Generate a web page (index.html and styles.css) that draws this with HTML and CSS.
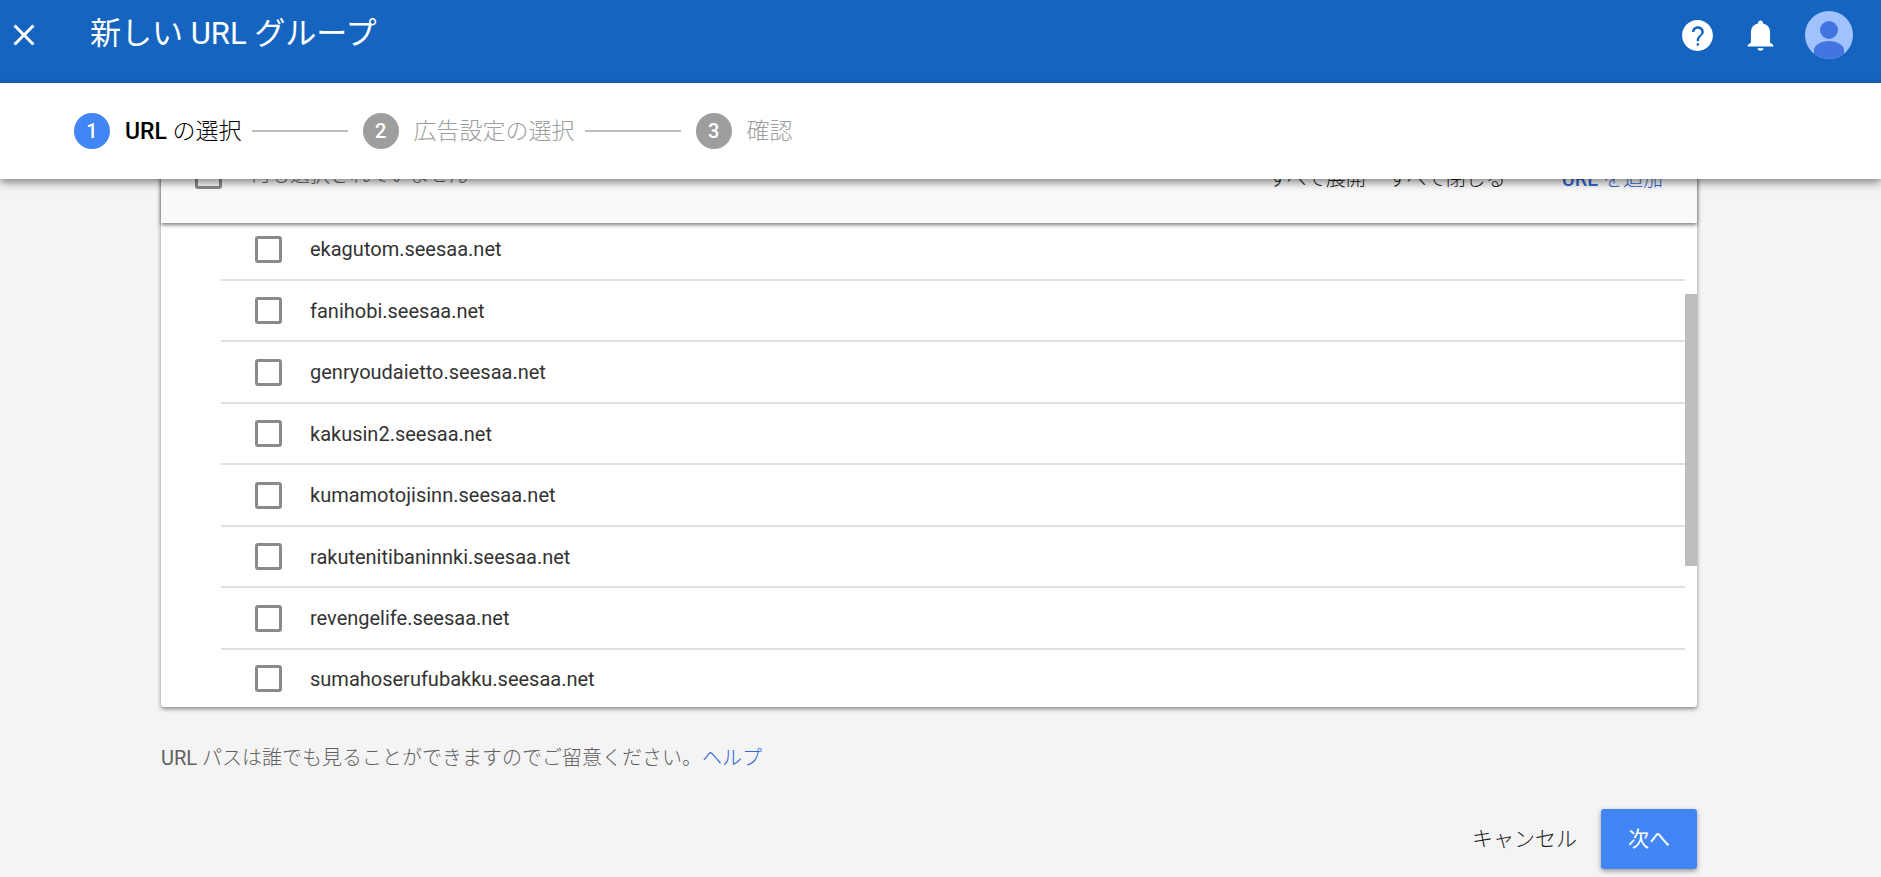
FILE: index.html
```html
<!DOCTYPE html>
<html lang="ja">
<head>
<meta charset="utf-8">
<title>新しい URL グループ</title>
<link rel="stylesheet" href="styles.css">
</head>
<body>
<header class="topbar">
  <button class="icon-button close" type="button" aria-label="閉じる">
    <svg width="36" height="36" viewBox="0 0 24 24"><path d="M19 6.41 17.59 5 12 10.59 6.41 5 5 6.41 10.59 12 5 17.59 6.41 19 12 13.41 17.59 19 19 17.59 13.41 12z"/></svg>
  </button>
  <h1 class="title">新しい URL グループ</h1>
  <div class="actions">
    <button class="icon-button" type="button" aria-label="ヘルプ">
      <svg width="37" height="37" viewBox="0 0 24 24"><path d="M12 2C6.48 2 2 6.48 2 12s4.480 10 10 10 10-4.480 10-10S17.520 2 12 2zm1 16.600h-1.500v-1.500h1.500zm2.100-6.900-.9.920c-.8.830-1.200 1.400-1.200 3.080h-1.500v-.5c0-1.200.45-2.100 1.170-2.830l1.240-1.260c.37-.36.59-.86.59-1.410 0-1.200-.95-2.150-2.250-2.150S10 8.500 10 9.800H8.400c0-2.210 1.640-3.750 3.850-3.750s3.850 1.540 3.850 3.600c0 .88-.4 1.500-1 2.050z"/></svg>
    </button>
    <button class="icon-button" type="button" aria-label="通知">
      <svg width="37" height="37" viewBox="0 0 24 24"><path d="M12 21.800c1.100 0 1.900-.6 1.900-1.600h-3.800c0 1 .8 1.600 1.900 1.600zM18.200 16.500V10c0-3.070-1.600-5.140-4.600-5.820V3.700c0-.83-.77-1.500-1.600-1.500s-1.600.67-1.600 1.500v.48C7.400 4.860 5.800 6.920 5.800 10v6.500L3.700 18.200v.9h16.600v-.9z"/></svg>
    </button>
    <button class="icon-button" type="button" aria-label="アカウント">
      <svg width="48" height="48" viewBox="0 0 48 48"><defs><clipPath id="disc"><circle cx="24" cy="24" r="24"/></clipPath></defs><g clip-path="url(#disc)"><rect width="48" height="48" fill="#a0c3ff"/><circle cx="24" cy="19" r="9" fill="#4374e0"/><path d="M9 48V39c0-5 7-9 15-9s15 4 15 9v9z" fill="#4374e0"/></g></svg>
    </button>
  </div>
</header>

<nav class="stepper" aria-label="手順">
  <ol class="steps">
    <li class="step current" aria-current="step"><span class="badge">1</span><span class="step-name"><span class="latin">URL</span> の選択</span></li>
    <li class="step"><span class="badge">2</span><span class="step-name">広告設定の選択</span></li>
    <li class="step"><span class="badge">3</span><span class="step-name">確認</span></li>
  </ol>
</nav>

<main class="content">
  <section class="card">
    <div class="card-head">
      <label class="select-all"><input class="box" type="checkbox"><span>何も選択されていません</span></label>
      <div class="tools">
        <button class="text-button" type="button">すべて展開</button>
        <button class="text-button" type="button">すべて閉じる</button>
        <button class="text-button add" type="button"><span class="latin">URL</span> を追加</button>
      </div>
    </div>
    <div class="list-wrap">
      <ul class="list">
        <li class="row"><label class="row-label"><input class="box" type="checkbox"><span>ekagutom.seesaa.net</span></label></li>
        <li class="row"><label class="row-label"><input class="box" type="checkbox"><span>fanihobi.seesaa.net</span></label></li>
        <li class="row"><label class="row-label"><input class="box" type="checkbox"><span>genryoudaietto.seesaa.net</span></label></li>
        <li class="row"><label class="row-label"><input class="box" type="checkbox"><span>kakusin2.seesaa.net</span></label></li>
        <li class="row"><label class="row-label"><input class="box" type="checkbox"><span>kumamotojisinn.seesaa.net</span></label></li>
        <li class="row"><label class="row-label"><input class="box" type="checkbox"><span>rakutenitibaninnki.seesaa.net</span></label></li>
        <li class="row"><label class="row-label"><input class="box" type="checkbox"><span>revengelife.seesaa.net</span></label></li>
        <li class="row"><label class="row-label"><input class="box" type="checkbox"><span>sumahoserufubakku.seesaa.net</span></label></li>
      </ul>
      <div class="thumb"></div>
    </div>
  </section>
  <p class="note"><span class="latin">URL</span> パスは誰でも見ることができますのでご留意ください。<a class="help" href="#">ヘルプ</a></p>
  <div class="footer">
    <button class="cancel" type="button">キャンセル</button>
    <button class="next" type="button">次へ</button>
  </div>
</main>
</body>
</html>
```
FILE: styles.css
```css
* { box-sizing: border-box; }
body {
  margin: 0;
  background: #f4f4f4;
  color: #212121;
  font-family: Roboto, "Noto Sans CJK JP", sans-serif;
  font-weight: 300;
  font-size: 20px;
  line-height: 28px;
}
button {
  border: 0;
  padding: 0;
  background: none;
  color: inherit;
  font: inherit;
  cursor: pointer;
}
.latin { font-weight: 400; }

.topbar {
  display: flex;
  align-items: center;
  height: 83px;
  padding: 0 28px 13px 6px;
  background: #1565c0;
  color: #fff;
}
.icon-button { display: flex; }
.icon-button svg { fill: currentColor; }
.title {
  flex: 1;
  margin: 0 0 2px 48px;
  font-size: 31px;
  line-height: 40px;
  font-weight: 400;
}
.actions { display: flex; align-items: center; gap: 26px; }

.stepper {
  position: relative;
  z-index: 2;
  display: flex;
  align-items: center;
  height: 96px;
  padding: 0 74px;
  background: #fff;
  box-shadow: 0 3px 9px rgba(0, 0, 0, .5);
}
.steps {
  display: flex;
  margin: 0;
  padding: 0;
  list-style: none;
  color: #9e9e9e;
  font-size: 23px;
}
.step { display: flex; align-items: center; }
.step-name { padding-top: 2px; }
.step + .step::before {
  content: "";
  width: 96px;
  height: 2px;
  margin: 0 15px 0 10px;
  background: #bdbdbd;
}
.badge {
  width: 36px;
  height: 36px;
  margin-right: 15px;
  border-radius: 50%;
  background: #9e9e9e;
  color: #fff;
  font-size: 20px;
  font-weight: 500;
  line-height: 36px;
  text-align: center;
}
.current { color: #000; }
.current .badge { background: #4285f4; }
.current .latin { font-weight: 500; }

.content { padding: 0 184px 8px 161px; }
.card {
  margin-top: -52px;
  border-radius: 3px;
  background: #fff;
  box-shadow: 0 2px 4px rgba(0, 0, 0, .45);
}
.card-head {
  position: relative;
  z-index: 1;
  display: flex;
  align-items: center;
  justify-content: space-between;
  height: 96px;
  padding: 0 34px;
  background: #fafafa;
  box-shadow: 0 2px 4px rgba(0, 0, 0, .5);
}
.box {
  appearance: none;
  flex: none;
  width: 27px;
  height: 27px;
  margin: 0;
  border: 3px solid #8a8a8a;
  border-radius: 3px;
  background: transparent;
}
.select-all { display: flex; align-items: center; gap: 28px; color: #616161; }
.tools { display: flex; gap: 22px; padding-top: 7px; }
.add { margin-left: 34px; color: #3367d6; }
.add .latin { font-weight: 500; }

.list-wrap { position: relative; }
.list {
  margin: -4px 12px 0 60px;
  padding: 0;
  list-style: none;
}
.row { height: 62px; border-bottom: 2px solid #e0e0e0; }
.row:nth-child(even) { height: 61px; }
.row:last-child { height: 57px; border-bottom: 0; }
.row-label {
  display: flex;
  align-items: center;
  gap: 28px;
  height: 100%;
  padding-left: 34px;
  color: #333;
  font-weight: 400;
}
.thumb {
  position: absolute;
  top: 75px;
  right: 0;
  width: 12px;
  height: 272px;
  background: #bdbdbd;
}

.note { margin: 37px 0 37px; color: #616161; }
.help { color: #3367d6; text-decoration: none; }
.footer {
  display: flex;
  justify-content: flex-end;
  align-items: center;
  gap: 24px;
  font-size: 21px;
}
.next {
  width: 96px;
  height: 60px;
  border-radius: 3px;
  background: #4285f4;
  color: #fff;
  font-weight: 400;
  box-shadow: 0 2px 5px rgba(0, 0, 0, .4);
}
```
